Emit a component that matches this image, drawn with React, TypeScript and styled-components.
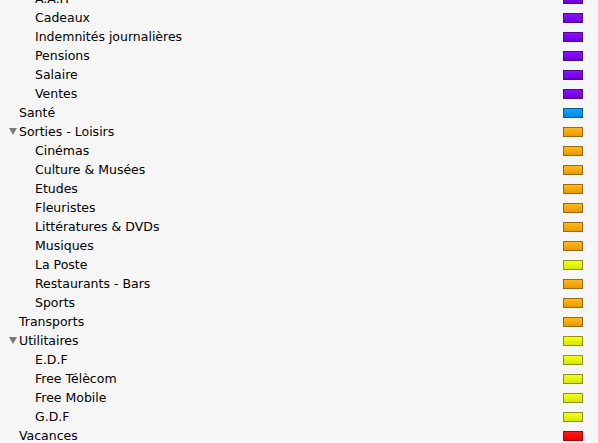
import React from "react";
import styled, { createGlobalStyle } from "styled-components";

const GlobalStyle = createGlobalStyle`
  html, body {
    margin: 0;
    padding: 0;
    background-color: #f6f6f6;
    overflow: hidden;
  }
`;

type Tone = "purple" | "blue" | "orange" | "yellow" | "red";

const tones: Record<Tone, { top: string; bottom: string; border: string }> = {
  purple: { top: "#8a10ff", bottom: "#6c00d8", border: "#4e0a8c" },
  blue: { top: "#10a8ff", bottom: "#0088dd", border: "#0a5a8c" },
  orange: { top: "#ffb81a", bottom: "#e89a00", border: "#9a6a10" },
  yellow: { top: "#f4ff1a", bottom: "#d4e600", border: "#8e9410" },
  red: { top: "#ff1a1a", bottom: "#ee0000", border: "#a00c0c" },
};

const Outline = styled.div`
  height: 443px;
  overflow: hidden;
  background-color: #f6f6f6;
  font-family: "DejaVu Sans", "Liberation Sans", sans-serif;
  font-size: 12.5px;
  color: #000;
`;

const List = styled.ul`
  list-style: none;
  margin: -11px 0 0 0;
  padding: 0;
`;

const Row = styled.li<{ $level: number }>`
  display: flex;
  align-items: center;
  height: 19px;
  padding-left: ${(p) => 9 + p.$level * 16}px;
  padding-right: 15px;
`;

const Disclosure = styled.span<{ $open: boolean }>`
  width: 10px;
  flex: none;
  display: flex;
  align-items: center;

  &::before {
    content: "";
    display: ${(p) => (p.$open ? "block" : "none")};
    width: 0;
    height: 0;
    border-left: 4px solid transparent;
    border-right: 4px solid transparent;
    border-top: 7px solid #7a7a7a;
  }
`;

const Label = styled.span`
  flex: 1;
  white-space: nowrap;
  line-height: 19px;
`;

const Swatch = styled.span<{ $tone: Tone }>`
  flex: none;
  width: 20px;
  height: 10px;
  box-sizing: border-box;
  border: 1px solid ${(p) => tones[p.$tone].border};
  background: linear-gradient(
    ${(p) => tones[p.$tone].top},
    ${(p) => tones[p.$tone].bottom}
  );
`;

type Item = { label: string; level: number; tone: Tone; open?: boolean };

const items: Item[] = [
  { label: "A.A.H", level: 1, tone: "purple" },
  { label: "Cadeaux", level: 1, tone: "purple" },
  { label: "Indemnités journalières", level: 1, tone: "purple" },
  { label: "Pensions", level: 1, tone: "purple" },
  { label: "Salaire", level: 1, tone: "purple" },
  { label: "Ventes", level: 1, tone: "purple" },
  { label: "Santé", level: 0, tone: "blue" },
  { label: "Sorties - Loisirs", level: 0, tone: "orange", open: true },
  { label: "Cinémas", level: 1, tone: "orange" },
  { label: "Culture & Musées", level: 1, tone: "orange" },
  { label: "Etudes", level: 1, tone: "orange" },
  { label: "Fleuristes", level: 1, tone: "orange" },
  { label: "Littératures & DVDs", level: 1, tone: "orange" },
  { label: "Musiques", level: 1, tone: "orange" },
  { label: "La Poste", level: 1, tone: "yellow" },
  { label: "Restaurants - Bars", level: 1, tone: "orange" },
  { label: "Sports", level: 1, tone: "orange" },
  { label: "Transports", level: 0, tone: "orange" },
  { label: "Utilitaires", level: 0, tone: "yellow", open: true },
  { label: "E.D.F", level: 1, tone: "yellow" },
  { label: "Free Télècom", level: 1, tone: "yellow" },
  { label: "Free Mobile", level: 1, tone: "yellow" },
  { label: "G.D.F", level: 1, tone: "yellow" },
  { label: "Vacances", level: 0, tone: "red" },
];

function App(): React.ReactElement {
  return (
    <Outline>
      <GlobalStyle />
      <List>
        {items.map((item) => (
          <Row key={item.label} $level={item.level}>
            <Disclosure $open={!!item.open} />
            <Label>{item.label}</Label>
            <Swatch $tone={item.tone} />
          </Row>
        ))}
      </List>
    </Outline>
  );
}

export default App;
